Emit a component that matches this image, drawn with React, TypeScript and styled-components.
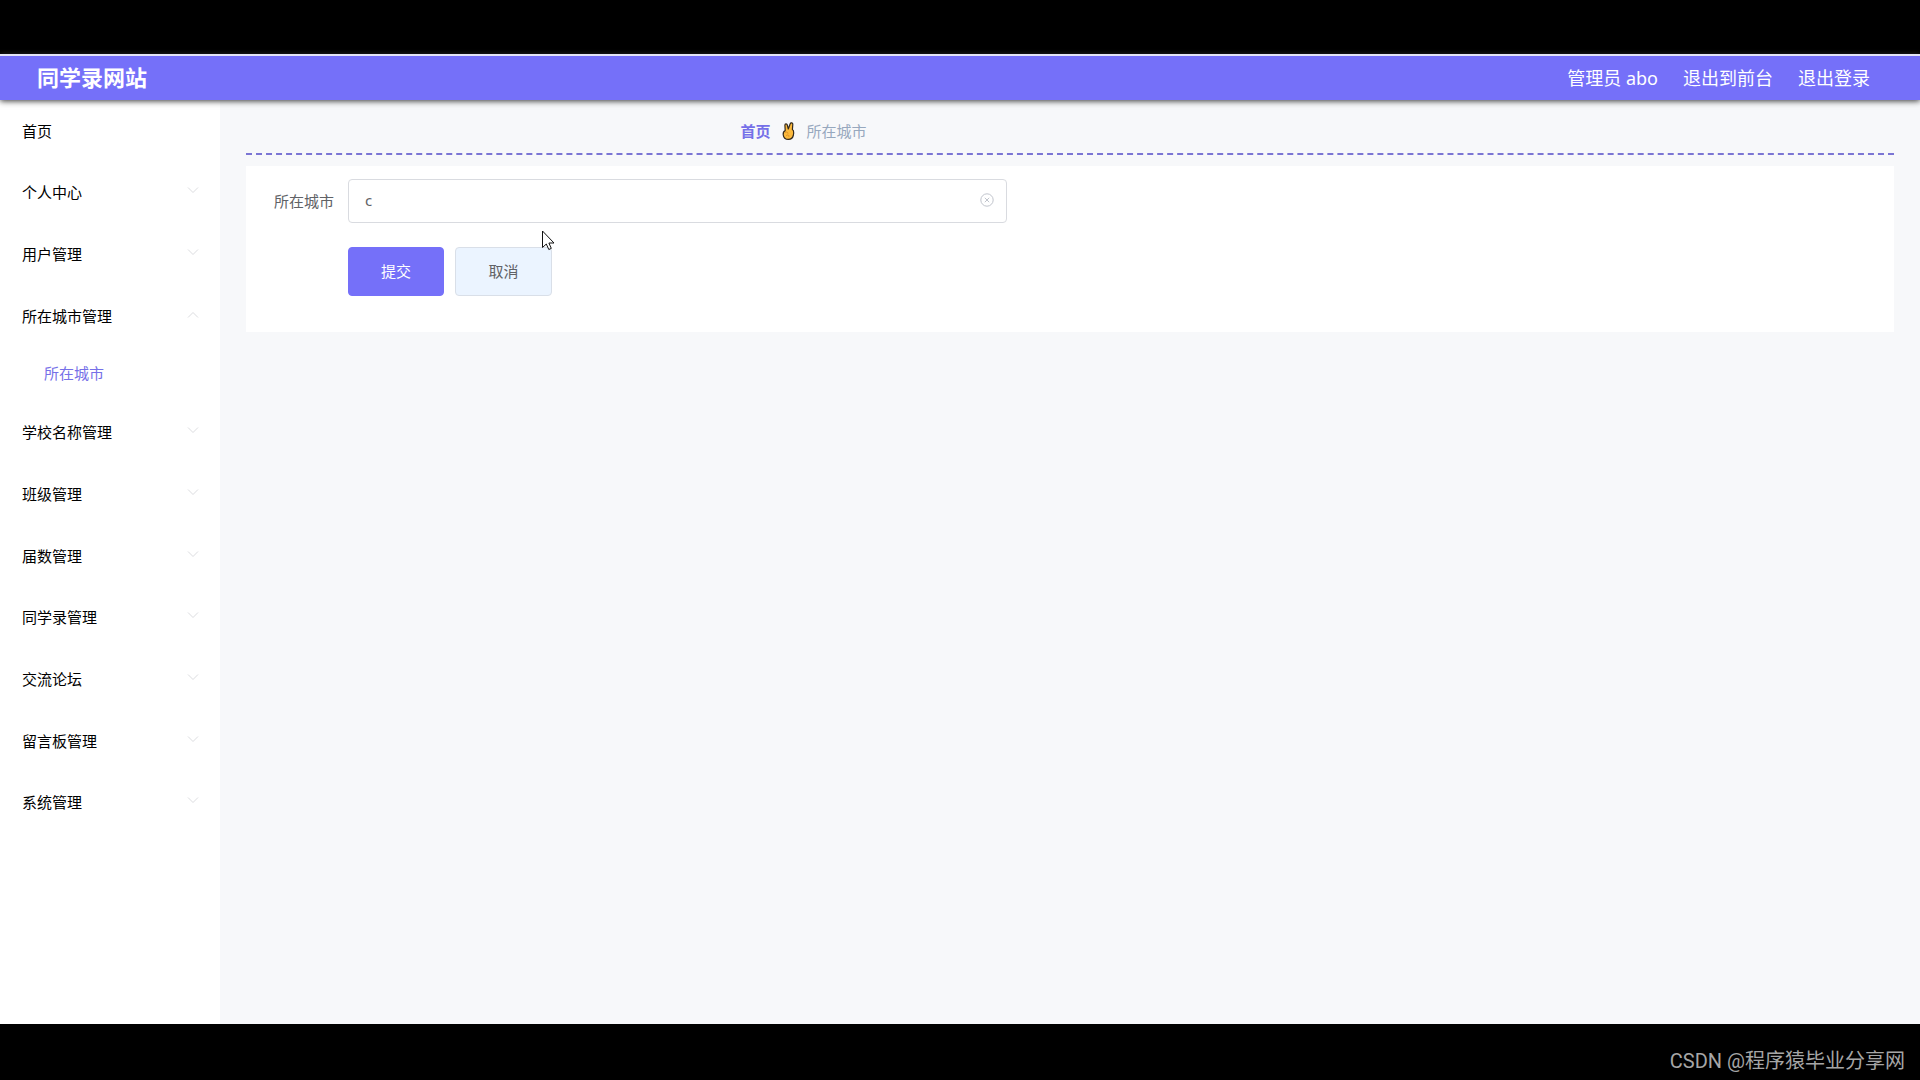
import React, { useState } from "react";
import styled, { createGlobalStyle } from "styled-components";

const GlobalStyle = createGlobalStyle`
  * { box-sizing: border-box; }
  body {
    margin: 0;
    background: #000;
    font-family: "Noto Sans", "Noto Sans CJK SC", sans-serif;
    font-size: 15px;
  }
  button, input { font: inherit; }
  ul { list-style: none; margin: 0; padding: 0; }
  a { color: inherit; text-decoration: none; }
`;

const Screen = styled.div`
  display: flex;
  flex-direction: column;
  min-height: 100vh;
  padding-top: 54px;
`;

const Header = styled.header`
  display: flex;
  align-items: center;
  justify-content: space-between;
  height: 46px;
  padding: 0 50px 0 37px;
  border-top: 2px solid #e4e4f6;
  background: #7570f9;
  color: #fff;
  box-shadow: 0 1px 6px #333;
  z-index: 1;
`;

const SiteTitle = styled.h1`
  margin: 0;
  padding-bottom: 2px;
  font-size: 22px;
  line-height: 32px;
  font-weight: 700;
`;

const HeaderNav = styled.nav`
  display: flex;
  gap: 25px;
  font-size: 18px;
  line-height: 28px;
`;

const Body = styled.div`
  display: flex;
  flex: 1;
  background: #f7f8fa;
`;

const Sidebar = styled.nav`
  width: 220px;
  flex-shrink: 0;
  background: #fff;
`;

const MenuItem = styled.li`
  &:nth-child(3n + 1) > button { height: 61px; }
`;

const MenuButton = styled.button`
  display: flex;
  align-items: center;
  justify-content: space-between;
  width: 100%;
  height: 62px;
  padding: 0 20px 0 22px;
  border: 0;
  background: none;
  color: #000;
  line-height: 24px;
  cursor: pointer;
`;

const SubLink = styled.a`
  display: flex;
  align-items: center;
  height: 55px;
  padding: 0 0 2px 44px;
  color: #7670e8;
`;

const ChevronIcon = styled.svg<{ $open: boolean }>`
  width: 14px;
  height: 14px;
  margin-bottom: ${(p) => (p.$open ? 2 : 4)}px;
  fill: none;
  stroke: #dcdde0;
  transform: ${(p) => (p.$open ? "rotate(180deg)" : "none")};
`;

const Main = styled.main`
  flex: 1;
  min-width: 0;
  padding: 0 26px;
`;

const Breadcrumb = styled.nav`
  display: flex;
  align-items: center;
  gap: 11px;
  padding: 19px 0 10px 30%;
  margin-bottom: 11px;
  border-bottom: 2px dashed #7b75d4;
  line-height: 24px;
  color: #97a8be;
`;

const HomeLink = styled.a`
  color: #7670e8;
  font-weight: 700;
`;

const Card = styled.form`
  display: flex;
  flex-direction: column;
  gap: 24px;
  padding: 13px 0 36px;
  background: #fff;
`;

const Field = styled.div`
  display: flex;
  align-items: center;
`;

const Label = styled.label`
  width: 102px;
  padding: 0 14px 2px 0;
  text-align: right;
  color: #606266;
`;

const InputBox = styled.div`
  display: flex;
  align-items: center;
  width: 40%;
  height: 44px;
  padding: 0 12px 0 16px;
  border: 1px solid #d9dbe0;
  border-radius: 4px;
  background: #fff;
`;

const TextInput = styled.input`
  flex: 1;
  min-width: 0;
  padding: 0 0 2px;
  border: 0;
  outline: 0;
  background: none;
  color: #606266;
`;

const ClearButton = styled.button`
  display: flex;
  padding: 0 0 2px;
  border: 0;
  background: none;
  color: #c0c4cc;
  cursor: pointer;
`;

const Actions = styled.div`
  display: flex;
  gap: 11px;
  padding-left: 102px;
`;

const ActionButton = styled.button<{ $primary?: boolean }>`
  width: ${(p) => (p.$primary ? 96 : 97)}px;
  height: 49px;
  padding: 0 0 2px;
  border: 1px solid ${(p) => (p.$primary ? "#7570f9" : "#d9dfe8")};
  border-radius: 4px;
  background: ${(p) => (p.$primary ? "#7570f9" : "#ebf4ff")};
  color: ${(p) => (p.$primary ? "#fff" : "#606266")};
  cursor: pointer;
`;

const Footer = styled.footer`
  display: flex;
  align-items: center;
  justify-content: flex-end;
  height: 56px;
  padding: 14px 15px 0 0;
  font-family: Roboto, "Noto Sans CJK SC", sans-serif;
  font-size: 20px;
  color: #a6a6a6;
`;

const Pointer = styled.svg`
  position: absolute;
  left: 542px;
  top: 230px;
  width: 13px;
  height: 21px;
  z-index: 2;
  pointer-events: none;
`;

const menu: { title: string; children?: string[]; leaf?: boolean }[] = [
  { title: "首页", leaf: true },
  { title: "个人中心" },
  { title: "用户管理" },
  { title: "所在城市管理", children: ["所在城市"] },
  { title: "学校名称管理" },
  { title: "班级管理" },
  { title: "届数管理" },
  { title: "同学录管理" },
  { title: "交流论坛" },
  { title: "留言板管理" },
  { title: "系统管理" },
];

function VictoryHand() {
  return (
    <svg width="14" height="20" viewBox="0 0 14 20" aria-hidden="true">
      <path
        d="M4.200 9.600 3.900 4.200C3.900 2.600 5.900 2.400 6.300 4L7.300 8 9.200 2.800C9.800 1.200 12 1.800 11.800 3.500L11.400 8.500C12.700 9.200 12.800 10.200 12.700 12L12.300 14.500C11.600 17.300 10 18.400 7.500 18.400 4.500 18.400 2.500 16.500 2.200 13.700 2 11.500 2.600 10.300 4.200 9.600Z"
        fill="#fbb93c"
        stroke="#33291c"
        strokeWidth="1.200"
        strokeLinejoin="round"
      />
      <path d="M4.600 11.200C5.800 10.600 6.800 11.200 7 12.300M5.500 14.300C6.800 13.300 8.300 14 8 15.400" fill="none" stroke="#d98a1f" strokeWidth=".9" strokeLinecap="round" />
    </svg>
  );
}

export default function App() {
  const [city, setCity] = useState("c");
  return (
    <Screen>
      <GlobalStyle />
      <Header>
        <SiteTitle>同学录网站</SiteTitle>
        <HeaderNav>
          <span>管理员 abo</span>
          <a href="#front">退出到前台</a>
          <a href="#logout">退出登录</a>
        </HeaderNav>
      </Header>
      <Body>
        <Sidebar>
          <ul>
            {menu.map((item) => (
              <MenuItem key={item.title}>
                <MenuButton type="button">
                  {item.title}
                  {!item.leaf && (
                    <ChevronIcon $open={!!item.children} viewBox="0 0 14 14" aria-hidden="true">
                      <path d="M2 4.500 7 9.500 12 4.500" />
                    </ChevronIcon>
                  )}
                </MenuButton>
                {item.children?.map((child) => (
                  <SubLink key={child} href="#city">
                    {child}
                  </SubLink>
                ))}
              </MenuItem>
            ))}
          </ul>
        </Sidebar>
        <Main>
          <Breadcrumb>
            <HomeLink href="#home">首页</HomeLink>
            <VictoryHand />
            <span>所在城市</span>
          </Breadcrumb>
          <Card onSubmit={(e) => e.preventDefault()}>
            <Field>
              <Label htmlFor="city">所在城市</Label>
              <InputBox>
                <TextInput id="city" value={city} onChange={(e) => setCity(e.target.value)} />
                <ClearButton type="button" aria-label="清空" onClick={() => setCity("")}>
                  <svg width="14" height="14" viewBox="0 0 14 14" fill="none" stroke="currentColor">
                    <circle cx="7" cy="7" r="6.200" />
                    <path d="M4.800 4.800 9.200 9.200M9.200 4.800 4.800 9.200" />
                  </svg>
                </ClearButton>
              </InputBox>
            </Field>
            <Actions>
              <ActionButton type="submit" $primary>
                提交
              </ActionButton>
              <ActionButton type="button">取消</ActionButton>
            </Actions>
          </Card>
        </Main>
      </Body>
      <Footer>CSDN @程序猿毕业分享网</Footer>
      <Pointer viewBox="0 0 13 21" aria-hidden="true">
        <path
          d="M.5 1V17.500L4.300 14 6.800 19.500 9.300 18.400 6.900 13H12Z"
          fill="#fff"
          stroke="#111"
          strokeLinejoin="round"
        />
      </Pointer>
    </Screen>
  );
}
